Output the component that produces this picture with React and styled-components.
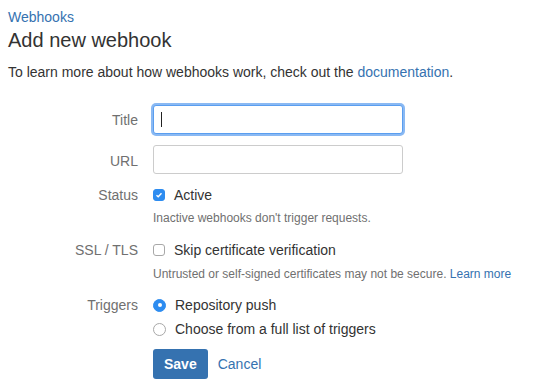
import styled, { createGlobalStyle } from "styled-components";

const GlobalStyle = createGlobalStyle`
  body {
    margin: 0;
    background: #fff;
    font-family: "Liberation Sans", Arial, sans-serif;
    color: #333;
  }
`;

const Page = styled.div`
  padding: 9px 8px 0;
`;

const Crumb = styled.a`
  display: block;
  font-size: 14px;
  line-height: 16px;
  color: #3572b0;
  text-decoration: none;
`;

const Title = styled.h1`
  margin: 2px 0 0;
  font-size: 20px;
  font-weight: normal;
  line-height: 26px;
  color: #333;
`;

const Intro = styled.p`
  margin: 9px 0 0;
  font-size: 14px;
  line-height: 20px;
`;

const Link = styled.a`
  color: #3572b0;
  text-decoration: none;
`;

const Form = styled.form`
  margin-top: 23px;
  display: grid;
  grid-template-columns: 130px 250px;
  column-gap: 15px;
  align-items: start;
`;

const Label = styled.label`
  text-align: right;
  font-size: 14px;
  color: #707070;
  line-height: 20px;
  padding-top: ${(p) => p.$top || 0}px;
`;

const Field = styled.div`
  display: flex;
  flex-direction: column;
  margin-bottom: ${(p) => p.$gap || 0}px;
`;

const TextInput = styled.input`
  box-sizing: border-box;
  width: 250px;
  height: 29px;
  padding: 4px 6px;
  font: 14px "Liberation Sans", Arial, sans-serif;
  border: 1px solid #ccc;
  border-radius: 3px;
  outline: none;
  ${(p) =>
    p.$focus &&
    `
    border-color: #5a9ef0;
    box-shadow: 0 0 0 2px #8ab9f3;
  `}
`;

const Caret = styled.span`
  position: absolute;
  left: 8px;
  top: 7px;
  width: 1px;
  height: 15px;
  background: #222;
`;

const InputWrap = styled.div`
  position: relative;
  width: 250px;
`;

const Option = styled.div`
  display: flex;
  align-items: center;
  gap: 9px;
  font-size: 14px;
  line-height: 20px;
  color: #333;
  height: 20px;
  margin-bottom: ${(p) => p.$gap || 0}px;
`;

const Box = styled.span`
  box-sizing: border-box;
  width: 12px;
  height: 12px;
  border-radius: 3px;
  border: 1px solid ${(p) => (p.$on ? "#2d8cf0" : "#a8a8a8")};
  background: ${(p) => (p.$on ? "#2d8cf0" : "#fff")};
  display: flex;
  align-items: center;
  justify-content: center;
`;

const Radio = styled.span`
  box-sizing: border-box;
  width: 13px;
  height: 13px;
  border-radius: 50%;
  border: 1px solid ${(p) => (p.$on ? "#2d8cf0" : "#a8a8a8")};
  background: ${(p) => (p.$on ? "#2d8cf0" : "#fff")};
  display: flex;
  align-items: center;
  justify-content: center;
  &::after {
    content: "";
    display: ${(p) => (p.$on ? "block" : "none")};
    width: 4px;
    height: 4px;
    border-radius: 50%;
    background: #fff;
  }
`;

const Help = styled.div`
  margin-top: ${(p) => p.$top || 5}px;
  font-size: 12px;
  line-height: 16px;
  color: #707070;
  white-space: nowrap;
`;

const Actions = styled.div`
  grid-column: 2;
  display: flex;
  align-items: center;
  gap: 10px;
`;

const SaveBtn = styled.button`
  height: 30px;
  padding: 0 11px;
  border: none;
  border-radius: 3px;
  background: #3572b0;
  color: #fff;
  font: bold 14px "Liberation Sans", Arial, sans-serif;
`;

const CancelLink = styled.a`
  font-size: 14px;
  color: #3572b0;
  text-decoration: none;
`;

const Tick = () => (
  <svg width="8" height="8" viewBox="0 0 8 8">
    <path d="M1.5 4.2 L3.2 5.8 L6.5 2.2" fill="none" stroke="#fff" strokeWidth="1.4" />
  </svg>
);

export default function App() {
  return (
    <Page>
      <GlobalStyle />
      <Crumb href="#">Webhooks</Crumb>
      <Title>Add new webhook</Title>
      <Intro>
        To learn more about how webhooks work, check out the <Link href="#">documentation</Link>.
      </Intro>

      <Form>
        <Label $top={5}>Title</Label>
        <Field $gap={11}>
          <InputWrap>
            <TextInput $focus />
            <Caret />
          </InputWrap>
        </Field>

        <Label $top={6}>URL</Label>
        <Field $gap={11}>
          <TextInput />
        </Field>

        <Label>Status</Label>
        <Field $gap={14}>
          <Option>
            <Box $on>
              <Tick />
            </Box>
            Active
          </Option>
          <Help>Inactive webhooks don't trigger requests.</Help>
        </Field>

        <Label>SSL / TLS</Label>
        <Field $gap={13}>
          <Option>
            <Box />
            Skip certificate verification
          </Option>
          <Help $top={6}>
            Untrusted or self-signed certificates may not be secure. <Link href="#">Learn more</Link>
          </Help>
        </Field>

        <Label>Triggers</Label>
        <Field $gap={10}>
          <Option $gap={4}>
            <Radio $on />
            Repository push
          </Option>
          <Option>
            <Radio />
            Choose from a full list of triggers
          </Option>
        </Field>

        <Actions>
          <SaveBtn type="button">Save</SaveBtn>
          <CancelLink href="#">Cancel</CancelLink>
        </Actions>
      </Form>
    </Page>
  );
}
